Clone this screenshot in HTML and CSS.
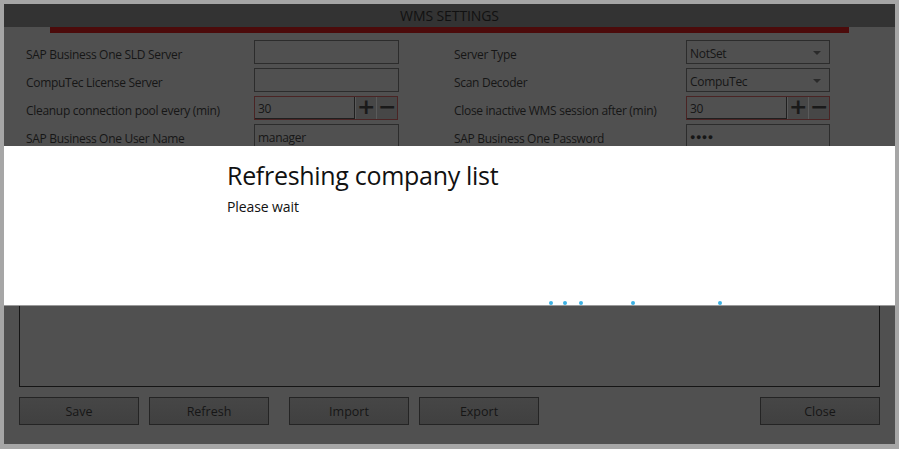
FILE: index.html
```html
<!DOCTYPE html>
<html>
<head>
<meta charset="utf-8">
<link rel="stylesheet" href="styles.css">
</head>
<body>
<div class="window">
  <div class="titlebar">WMS SETTINGS</div>
  <div class="accent"></div>
  <div class="form">
    <div class="label">SAP Business One SLD Server</div>
    <div class="field"><div class="input"></div></div>
    <div class="label">Server Type</div>
    <div class="field"><div class="input select">NotSet<span class="arrow"></span></div></div>

    <div class="label">CompuTec License Server</div>
    <div class="field"><div class="input"></div></div>
    <div class="label">Scan Decoder</div>
    <div class="field"><div class="input select">CompuTec<span class="arrow"></span></div></div>

    <div class="label">Cleanup connection pool every (min)</div>
    <div class="field"><div class="spinner"><div class="spin-text">30</div><div class="spin-btn">+</div><div class="spin-btn minus">&minus;</div></div></div>
    <div class="label">Close inactive WMS session after (min)</div>
    <div class="field"><div class="spinner"><div class="spin-text">30</div><div class="spin-btn">+</div><div class="spin-btn minus">&minus;</div></div></div>

    <div class="label">SAP Business One User Name</div>
    <div class="field"><div class="input">manager</div></div>
    <div class="label">SAP Business One Password</div>
    <div class="field"><div class="input pwd">&#9679;&#9679;&#9679;&#9679;</div></div>
  </div>
  <div class="listbox"></div>
  <div class="buttons">
    <div class="btn">Save</div>
    <div class="btn">Refresh</div>
    <div class="btn wide-gap">Import</div>
    <div class="btn">Export</div>
    <div class="btn push">Close</div>
  </div>

  <div class="overlay">
    <div class="modal">
      <div class="modal-title">Refreshing company list</div>
      <div class="modal-sub">Please wait</div>
      <span class="dot d1"></span>
      <span class="dot d2"></span>
      <span class="dot d3"></span>
      <span class="dot d4"></span>
      <span class="dot d5"></span>
    </div>
  </div>
</div>
</body>
</html>
```

FILE: styles.css
```css
* { box-sizing: border-box; }
html, body { margin: 0; padding: 0; }
body {
  width: 899px;
  height: 449px;
  background: #a6a6a6;
  padding: 4px;
  font-family: "Open Sans", "Noto Sans", sans-serif;
  overflow: hidden;
}
.window {
  position: relative;
  width: 891px;
  height: 440px;
  background: #505050;
  display: flex;
  flex-direction: column;
  overflow: hidden;
}
.titlebar {
  height: 23px;
  background: #333333;
  color: #111;
  font-size: 14px;
  text-align: center;
  line-height: 24px;
  letter-spacing: -0.1px;
}
.accent {
  height: 6px;
  margin: 0 46px;
  background: #4c0b0b;
}
.form {
  display: grid;
  grid-template-columns: 228px 200px 232px 144px;
  grid-auto-rows: 24px;
  row-gap: 4px;
  padding: 7px 0 0 22px;
  color: #161616;
  font-size: 12px;
  letter-spacing: -0.3px;
}
.label {
  display: flex;
  align-items: center;
  padding-top: 4px;
}
.field { display: flex; }
.input {
  width: 145px;
  height: 24px;
  border: 1px solid #2c2c2c;
  display: flex;
  align-items: center;
  padding: 2px 0 0 3px;
  font-size: 12px;
  color: #161616;
  position: relative;
}
.field:nth-child(4n) .input { width: 144px; }
.arrow {
  position: absolute;
  right: 8px;
  top: 10px;
  width: 0;
  height: 0;
  border-left: 4px solid transparent;
  border-right: 4px solid transparent;
  border-top: 4px solid #2a2a2a;
}
.pwd { font-size: 9px; letter-spacing: 0.5px; padding-top: 0; }
.spinner {
  width: 144px;
  height: 24px;
  border: 1px solid #4a2424;
  display: flex;
}
.spin-text {
  width: 100px;
  border-right: 1px solid #1f1f1f;
  border-bottom: 1px solid #1f1f1f;
  display: flex;
  align-items: center;
  padding: 2px 0 0 3px;
  font-size: 12px;
}
.spin-btn {
  width: 21px;
  background: #474747;
  border-left: 1px solid #5a5a5a;
  display: flex;
  align-items: center;
  justify-content: center;
  font-family: "DejaVu Sans", sans-serif;
  font-size: 22px;
  font-weight: bold;
  line-height: 1;
  color: #1a1a1a;
  padding-bottom: 2px;
}
.listbox {
  flex: 1;
  margin: 12px 15px 0 15px;
  border: 1px solid #151515;
}
.buttons {
  display: flex;
  height: 28px;
  margin: 10px 15px 19px 15px;
}
.btn {
  width: 120px;
  height: 28px;
  border: 1px solid #242424;
  background: linear-gradient(#464646, #404040);
  color: #161616;
  font-size: 12.5px;
  display: flex;
  align-items: center;
  justify-content: center;
  padding-top: 1px;
  margin-right: 10px;
}
.btn.wide-gap { margin-left: 10px; }
.btn.push { margin-left: auto; margin-right: 0; }

.overlay {
  position: absolute;
  inset: 0;
  padding-top: 142px;
}
.modal {
  position: relative;
  height: 160px;
  background: #ffffff;
  border-bottom: 1px solid #9a9a9a;
  padding: 12px 0 0 223px;
}
.modal-title {
  font-size: 25px;
  line-height: 34px;
  color: #111;
  letter-spacing: -0.3px;
}
.modal-sub {
  margin-top: 5px;
  font-size: 14px;
  line-height: 20px;
  color: #111;
  letter-spacing: -0.1px;
}
.dot {
  position: absolute;
  top: 155px;
  width: 4px;
  height: 4px;
  border-radius: 50%;
  background: #3cb1e4;
}
.d1 { left: 544.5px; }
.d2 { left: 558.5px; }
.d3 { left: 574.5px; }
.d4 { left: 626.5px; }
.d5 { left: 714px; }
```
